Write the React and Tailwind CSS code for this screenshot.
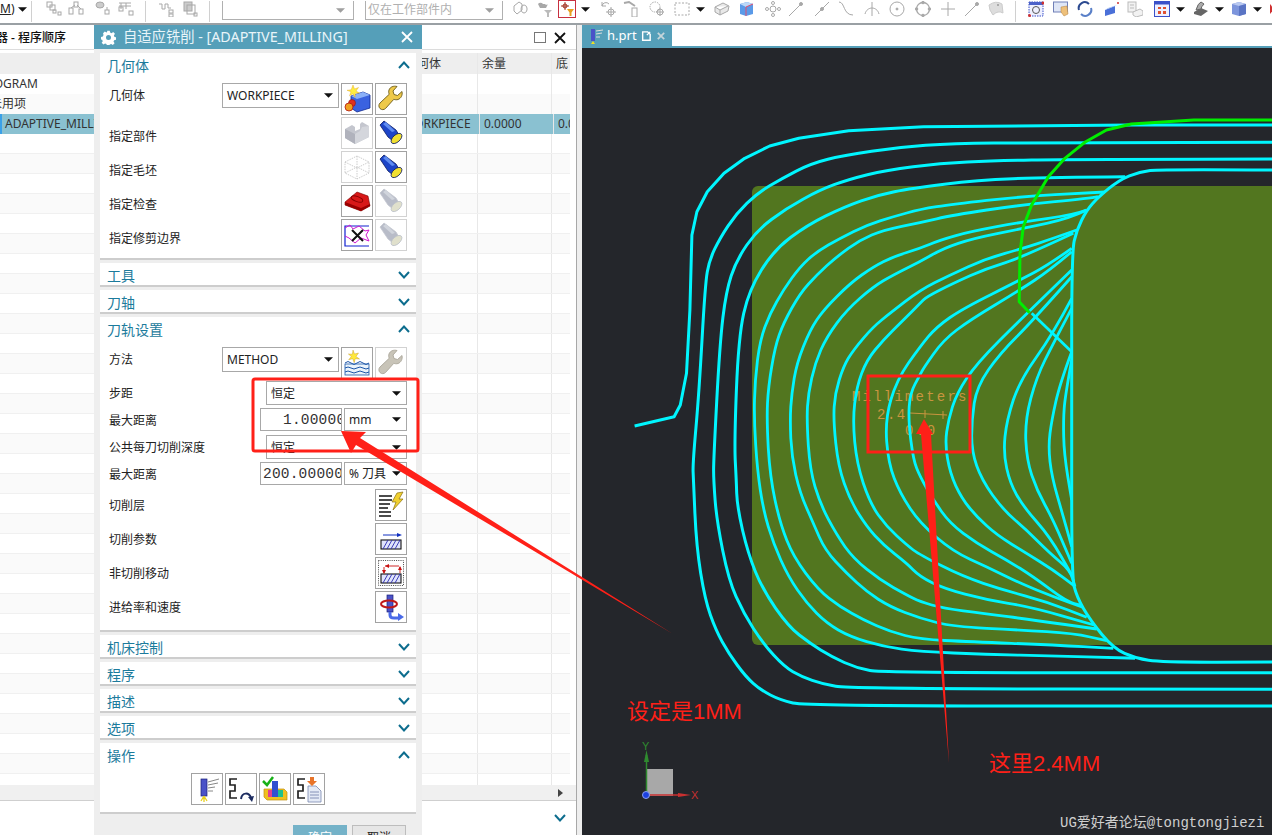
import React from "react";

const u = ([x, y]) => [620 + x / 2.405, 110 + y / 3];
const l = ([x, y]) => [600 + x / 2.333, 480 + y / 3];
const A = ([x, y]) => [750 + x / 3, 180 + y / 3];
const B = ([x, y]) => [920 + x / 3, 180 + y / 3];
const C = ([x, y]) => [750 + x / 3, 420 + y / 3];
const D = ([x, y]) => [920 + x / 3, 420 + y / 3];
const f = (n) => n.toFixed(1);
const path = (pts) => "M" + pts.map((p) => f(p[0]) + " " + f(p[1])).join("L");
const smooth = (pts) => {
  let d = "M" + f(pts[0][0]) + " " + f(pts[0][1]);
  for (let i = 1; i < pts.length - 1; i++) {
    const mx = (pts[i][0] + pts[i + 1][0]) / 2;
    const my = (pts[i][1] + pts[i + 1][1]) / 2;
    d += "Q" + f(pts[i][0]) + " " + f(pts[i][1]) + " " + f(mx) + " " + f(my);
  }
  const e = pts[pts.length - 1];
  return d + "L" + f(e[0]) + " " + f(e[1]);
};
const P = (up, low = []) => smooth([...up.map(u), ...low.map(l)]);
const Q = (b, a, c, d) => smooth([...b.map(B), ...(a || []).map(A), ...(c || []).map(C), ...(d || []).map(D)]);

const outer = [
  path([[35,948],[130,920],[145,885],[160,790],[168,600],[173,375],[185,305],[210,245],[250,190],[300,145],[360,108],[430,85],[550,62],[730,50],[1230,45],[1568,45]].map(u)),
  P([[1568,97],[1000,98],[800,100],[670,112],[540,135],[460,160],[390,205],[330,250],[280,310],[240,385],[215,450],[205,520],[190,850],[175,1060]],
    [[218,0],[225,200],[245,360],[270,450],[300,520],[340,590],[375,630],[420,660],[480,678],[1568,678]]),
  P([[1568,147],[1080,148],[900,152],[770,160],[640,180],[550,208],[480,240],[400,295],[330,360],[280,450],[255,545],[240,700],[225,1050]],
    [[265,0],[272,120],[300,300],[335,400],[380,490],[430,560],[470,590],[520,612],[580,626],[1568,628]]),
  P([[1215,200],[1030,202],[860,210],[700,235],[620,255],[540,290],[450,345],[370,420],[310,540],[285,680],[275,1000]],
    [[318,0],[320,80],[345,220],[380,330],[440,440],[490,490],[540,530],[600,565],[660,578],[1568,578]]),
  smooth([
    ...[[1568,180],[1300,178],[1250,185],[1200,210],[1150,262]].map(u),
    ...[[500,90],[470,150],[455,215],[455,720]].map(B),
    ...[[455,470],[470,530],[510,600],[580,685]].map(D),
    ...[[1250,535],[1310,547],[1568,546]].map(l),
  ]),
];

const inner = [
  Q([[555,36],[510,38],[300,50],[100,72],[0,88]],
    [[430,110],[350,135],[270,175],[200,215],[150,260],[100,330],[60,400],[30,480],[15,600],[12,720]],
    [[22,150],[40,270],[70,370],[115,470],[170,550],[230,610],[300,650],[400,680],[510,695]],
    [[200,703],[400,708],[600,713],[645,715]]),
  Q([[534,50],[510,55],[300,75],[100,105],[0,128]],
    [[400,150],[330,180],[260,230],[200,285],[150,340],[100,430],[75,500],[55,620],[50,720]],
    [[60,170],[90,310],[130,410],[205,510],[270,560],[340,600],[420,635],[510,658]],
    [[150,665],[400,675],[580,685]]),
  Q([[500,90],[460,105],[310,125],[150,155],[60,180],[0,205]],
    [[430,230],[370,260],[300,310],[220,390],[180,450],[140,550],[125,640],[120,720]],
    [[125,110],[150,220],[190,310],[225,390],[290,460],[350,515],[420,560],[510,595]],
    [[100,620],[300,630],[460,640],[560,662]]),
  Q([[500,90],[450,115],[310,145],[160,175],[70,205],[0,245]],
    [[430,285],[370,320],[290,390],[230,470],[195,550],[175,640],[170,720]],
    [[180,150],[210,250],[260,345],[310,415],[390,480],[470,525],[510,545]],
    [[70,565],[190,580],[340,600],[530,627]]),
  Q([[470,150],[400,175],[310,205],[200,235],[90,285],[0,330]],
    [[420,400],[370,440],[310,510],[280,560],[255,640],[250,720]],
    [[265,140],[300,240],[350,320],[400,375],[470,430],[510,470]],
    [[70,505],[200,540],[330,560],[522,615]]),
  Q([[460,160],[300,235],[200,265],[100,310],[20,350],[0,370]],
    [[460,420],[400,480],[350,540],[320,620],[308,720]],
    [[320,130],[360,250],[410,320],[470,375],[510,405]],
    [[130,470],[250,510],[380,545],[500,592]]),
  Q([[455,205],[385,255],[300,300],[130,385],[50,440],[0,500]],
    [[440,600],[405,720]],
    [[415,130],[450,220],[510,310]],
    [[100,395],[200,440],[300,490],[400,530],[488,562]]),
  Q([[455,215],[390,270],[300,330],[150,420],[70,480],[10,565],[0,585]],
    [[480,640],[475,720]],
    [[490,120],[510,170]],
    [[40,240],[90,310],[170,370],[260,420],[340,470],[440,545],[485,556]]),
  Q([[455,270],[300,420],[170,550],[110,640],[85,720]], null, null,
    [[75,70],[90,160],[125,235],[170,290],[230,345],[320,400],[400,450],[462,497]]),
  Q([[455,290],[340,420],[240,520],[170,620],[155,720]], null, null,
    [[155,95],[185,180],[250,270],[320,330],[390,400],[450,450],[465,500]]),
  Q([[455,355],[400,460],[300,600],[260,720]], null, null,
    [[250,100],[270,190],[310,260],[390,350],[458,470]]),
  Q([[455,385],[400,490],[350,590],[315,720]], null, null,
    [[320,120],[350,210],[400,300],[455,430]]),
  Q([[455,515],[420,610],[395,720]], null, null,
    [[385,80],[395,170],[430,290],[455,380]]),
  Q([[455,540],[435,650],[430,720]], null, null,
    [[432,100],[455,240]]),
  path([[335,400],[455,515]].map(B)),
];

const green = path([[1568,30],[1380,30],[1230,42],[1170,60],[1120,95],[1070,145],[1030,200],[990,285],[970,350],[962,430],[960,575],[985,608]].map(u));

const Ic = ({ children }) => (
  <svg viewBox="0 0 28 28" className="h-[28px] w-[28px]">{children}</svg>
);

const Flash = ({ gray }) => (
  <Ic>
    <path d="M3 6L7 2L19 11L22 16L16 22L11 18Z" fill={gray ? "#b8bcc8" : "#1d45c8"} stroke={gray ? "#c4c8d0" : "#0a1a60"} strokeWidth="0.8" />
    <path d="M6 5L9 3L18 12L15 13Z" fill={gray ? "#d0d4dc" : "#5f8cf0"} />
    <ellipse cx="19.5" cy="19.5" rx="6.5" ry="3.6" transform="rotate(-42 19.5 19.5)" fill={gray ? "#e0e0cc" : "#f0df30"} stroke={gray ? "#bcc0c8" : "#0a1a60"} strokeWidth="0.8" />
  </Ic>
);

const Wrench = ({ gray }) => (
  <Ic>
    <path d="M25 6.5l-4.5 4-3.5-1-1-3.5 4-4.5c-3.500-1-7 .5-8 3.500-.5 1.500-.3 3 .2 4.300L3 18c-1.500 1.500-1.500 4 0 5.500s4 1.500 5.500 0l8.300-9.200c1.300.5 2.800.7 4.200.2 3-1 4.800-4.500 4-8z"
      fill={gray ? "#c8c4b8" : "#eec94a"} stroke={gray ? "#aaa69a" : "#6b5a18"} strokeWidth="0.9" />
  </Ic>
);

const GeomNew = () => (
  <Ic>
    <path d="M8 11L20 7L27 10V23L14 27L8 23Z" fill="#3a62e0" stroke="#102a90" strokeWidth="0.8" />
    <path d="M8 11L20 7L27 10L14 14Z" fill="#8ab0f8" />
    <path d="M10 0l1.500 4 4-1.500-2.500 3.500 3.500 2-4.200.3-.3 4-2-3.500-3.500 2 1.500-4-4-1.500 4.200-.5z" fill="#ffee40" stroke="#e0a020" strokeWidth="0.4" />
    <circle cx="9" cy="18" r="3.500" fill="#e03020" stroke="#801010" strokeWidth="0.5" />
    <circle cx="6" cy="22" r="4" fill="#f0a020" stroke="#b01010" strokeWidth="0.8" />
  </Ic>
);

const GrayBlock = () => (
  <Ic>
    <path d="M2 10L9 6L12 8V12L17 10V5L19 3L26 7V18L12 25L2 19Z" fill="#c4c6ce" />
    <path d="M2 10L12 15V25L2 19Z" fill="#b0b2bc" />
    <path d="M12 15L17 12L19 8L26 7V18L12 25Z" fill="#d4d6dc" />
  </Ic>
);

const WireBox = () => (
  <Ic>
    <path d="M2 9L14 3L26 9V20L14 26L2 20ZM2 9L14 15L26 9M14 15V26M2 20L14 14L26 20M14 3V14" fill="none" stroke="#c0c0c0" strokeWidth="0.8" strokeDasharray="1.500 1" />
  </Ic>
);

const RedBlock = () => (
  <Ic>
    <path d="M2 15L14 5L25 9L27 19L18 24L2 18Z" fill="#d81818" stroke="#700" strokeWidth="0.6" />
    <path d="M2 15L18 21L27 17V19L18 24L2 18Z" fill="#900" />
    <ellipse cx="14" cy="12" rx="6" ry="2.500" transform="rotate(20 14 12)" fill="none" stroke="#800" strokeWidth="1" />
  </Ic>
);

const Trim = () => (
  <Ic>
    <path d="M26 5H2V25H26" fill="none" stroke="#1020d0" strokeWidth="1.200" />
    <path d="M2 7L7 4L10 8L16 5L22 10L26 9L23 14L26 20L18 17L12 22L6 17L2 15" fill="none" stroke="#d018d0" strokeWidth="1" />
    <path d="M9 9L20 20M20 9L9 20" stroke="#111" strokeWidth="2" />
  </Ic>
);

const Method = () => (
  <Ic>
    <rect x="2" y="15" width="24" height="11" fill="#eaf3fb" stroke="#1b55a8" strokeWidth="0.8" />
    <path d="M2 14q3 -3 6 0t6 0 6 0 6 0M2 19q3 -2 6 0t6 0 6 0 6 0M2 23q3 -2 6 0t6 0 6 0 6 0" fill="none" stroke="#1b55a8" strokeWidth="1" />
    <path d="M10 1l1.500 4 4-1-2.500 3.500 3.500 2.500-4.300-.3-1 4-1.500-4-4 1 2.700-3.200-3-2.500 4 .2z" fill="#ffe93a" stroke="#c09020" strokeWidth="0.4" />
  </Ic>
);

const Levels = () => (
  <Ic>
    <path d="M2 5H15M2 9H15M2 13H13M2 17H11M2 21H14M2 25H14" stroke="#111" strokeWidth="1.700" />
    <path d="M20 2L26 1L22 8L26 8L16 19L19 11L15 11Z" fill="#f0d030" stroke="#8a7010" strokeWidth="0.7" />
  </Ic>
);

const Hatch = ({ y = 14 }) => (
  <g>
    <rect x="4" y={y} width="20" height="9" fill="#dfe3fb" stroke="#111" strokeWidth="1.100" />
    <path d={`M6 ${y + 9}L11 ${y}M10 ${y + 9}L15 ${y}M14 ${y + 9}L19 ${y}M18 ${y + 9}L23 ${y}`} stroke="#2a2ab0" strokeWidth="0.9" />
  </g>
);

const CutParam = () => (
  <Ic>
    <Hatch y={15} />
    <path d="M6 10H21" stroke="#1030c0" strokeWidth="1" />
    <path d="M25 10L20 8V12Z" fill="#1030c0" />
  </Ic>
);

const NonCut = () => (
  <Ic>
    <rect x="1.500" y="1.500" width="25" height="25" fill="none" stroke="#333" strokeWidth="0.9" strokeDasharray="1 1.200" />
    <Hatch y={15} />
    <path d="M8 7H22M7 8V14M23 8V14" stroke="#c81010" strokeWidth="0.9" />
    <path d="M8 7L12 5V9ZM7 15L5 11H9ZM23 7L21 11H25Z" fill="#c81010" />
  </Ic>
);

const Spindle = () => <rect x="10" y="2" width="6" height="17" fill="#4a52c8" stroke="#1c2078" strokeWidth="0.7" />;

const Feed = () => (
  <Ic>
    <Spindle />
    <ellipse cx="12" cy="11" rx="8" ry="3.500" fill="none" stroke="#c01818" strokeWidth="2" />
    <path d="M13 19V22Q13 25 17 25H22" fill="none" stroke="#4a6ae8" strokeWidth="3" />
    <path d="M27 24L21 20V28Z" fill="#4a6ae8" />
  </Ic>
);

const OpGen = () => (
  <Ic>
    <rect x="8" y="4" width="6" height="17" fill="#4a52c8" stroke="#1c2078" strokeWidth="0.7" />
    <path d="M15 7L26 4M15 10L25 8M15 13L22 12M15 16L20 16" stroke="#888" strokeWidth="1" />
    <path d="M11 21L8 26M11 21L11 27M11 21L14 26" stroke="#e8d020" strokeWidth="1.300" />
  </Ic>
);

const SPath = () => <path d="M10 3H3V9H8V15H3V22H10" transform="translate(0 1)" fill="none" stroke="#222" strokeWidth="1.700" />;

const OpReplay = () => (
  <Ic>
    <SPath />
    <path d="M14 24C15 17 22 17 24 23" fill="none" stroke="#1d2c60" strokeWidth="2" />
    <path d="M27 21L21 22L25 27Z" fill="#1d2c60" />
  </Ic>
);

const OpVerify = () => (
  <Ic>
    <path d="M3 14H23L26 17V25H6L3 22Z" fill="#f0c020" stroke="#c09010" strokeWidth="0.7" />
    <rect x="11" y="6" width="6" height="16" fill="#3050d0" />
    <rect x="7" y="15" width="4" height="7" fill="#e04090" />
    <rect x="17" y="15" width="5" height="7" fill="#20c090" />
    <path d="M2 6L6 10L12 2" fill="none" stroke="#18b018" strokeWidth="2.500" />
  </Ic>
);

const OpList = () => (
  <Ic>
    <SPath />
    <path d="M13 11H21L26 16V27H13Z" fill="#e4eaf6" stroke="#7a88b0" strokeWidth="0.8" />
    <path d="M15 17H24M15 20H24M15 23H24" stroke="#7a88b0" strokeWidth="0.9" />
    <path d="M15 2L19 2L19 6L22 6L17 11L12 6H15Z" fill="#e8742a" />
  </Ic>
);

const Btn = ({ dim, children }) => (
  <div className={"flex h-8 w-8 shrink-0 items-center justify-center border bg-white " + (dim ? "border-[#d2d2d2]" : "border-[#a2a2a2]")}>
    {children}
  </div>
);

const Caret = ({ className = "" }) => (
  <svg viewBox="0 0 10 5" className={"h-[5px] w-[9px] shrink-0 " + className}><path d="M0 0H10L5 5Z" fill="#111" /></svg>
);

const Sel = ({ w, h, children }) => (
  <div className={"flex shrink-0 items-center justify-between border border-[#a8a8a8] bg-white pl-[4px] pr-[5px] text-[12px] text-[#222] " + w + " " + h}>
    <span className="whitespace-nowrap pt-[1px]">{children}</span>
    <Caret />
  </div>
);

const Chevron = ({ up }) => (
  <svg viewBox="0 0 12 8" className="h-[8px] w-[12px]">
    <path d={up ? "M1 7L6 1.500L11 7" : "M1 1L6 6.500L11 1"} fill="none" stroke="#0d6d8e" strokeWidth="2" />
  </svg>
);

const Head = ({ up, children }) => (
  <div className="flex h-[24px] items-center justify-between pl-[7px] pr-[6px] text-[14px] text-[#1c7b9c]">
    <span>{children}</span>
    <Chevron up={up} />
  </div>
);

const Collapsed = ({ children }) => (
  <div className="h-[24px] shrink-0 border-b-2 border-[#cdcdcd] bg-white"><Head>{children}</Head></div>
);

const GeoRow = ({ label, a, b, adim, bdim }) => (
  <div className="flex h-8 items-center justify-between">
    <span className="pt-[8px] text-[12px] text-[#222]">{label}</span>
    <div className="flex gap-[2px]">
      <Btn dim={adim}>{a}</Btn>
      <Btn dim={bdim}>{b}</Btn>
    </div>
  </div>
);

const Lbl = ({ children }) => <span className="pt-[2px] text-[12px] text-[#222]">{children}</span>;

const OneRow = ({ label, icon }) => (
  <div className="flex h-8 items-center justify-between">
    <Lbl>{label}</Lbl>
    <Btn>{icon}</Btn>
  </div>
);

const Num = ({ pad, children }) => (
  <div className={"h-[23px] w-[82px] shrink-0 overflow-hidden whitespace-nowrap border border-[#a8a8a8] bg-white font-['Liberation_Mono',monospace] text-[14.5px] leading-[22px] tracking-[0.2px] text-[#333] " + pad}>
    {children}
  </div>
);

const Dialog = () => (
  <div className="absolute bottom-0 left-[94px] top-[25px] flex w-[328px] flex-col bg-[#eeeeee]">
    <div className="flex h-[24px] shrink-0 items-center bg-[#559fb9] pl-[7px] pr-[9px] text-[14.3px] text-[#e9f5f9]">
      <svg viewBox="0 0 24 24" className="mr-[7px] h-[15px] w-[15px]">
        <path fill="#fff" fillRule="evenodd" d="M10 1h4l.6 3 2.300 1 2.600-1.700 2.800 2.800L20.600 8.700l1 2.300 2.400.6v4l-3 .6-1 2.300 1.700 2.600-2.800 2.800-2.600-1.700-2.300 1-.6 2.300h-4l-.6-3-2.300-1-2.600 1.700L1.100 20.400l1.700-2.600-1-2.300-1.800-.5v-4l3-.6 1-2.300L3.300 5.100 6.100 2.300l2.600 1.700 1-1zM12 8a4 4 0 1 0 0 8 4 4 0 0 0 0-8z" />
      </svg>
      <span className="flex-1 whitespace-nowrap">自适应铣削 - [ADAPTIVE_MILLING]</span>
      <svg viewBox="0 0 12 12" className="h-[12px] w-[12px]"><path d="M1 1L11 11M11 1L1 11" stroke="#fff" strokeWidth="1.800" /></svg>
    </div>
    <div className="flex flex-col gap-[3px] px-[6px] pt-[4px]">
      <div className="h-[207px] shrink-0 border-b-2 border-[#cdcdcd] bg-white">
        <Head up>几何体</Head>
        <div className="flex flex-col gap-[2px] pl-[9px] pr-[9px] pt-[6px]">
          <div className="flex h-8 items-start justify-between">
            <span className="flex h-[25px] items-center text-[12px] text-[#222]">几何体</span>
            <div className="flex gap-[2px]">
              <Sel w="w-[117px]" h="h-[25px]">WORKPIECE</Sel>
              <Btn><GeomNew /></Btn>
              <Btn><Wrench /></Btn>
            </div>
          </div>
          <GeoRow label="指定部件" a={<GrayBlock />} adim b={<Flash />} />
          <GeoRow label="指定毛坯" a={<WireBox />} adim b={<Flash />} />
          <GeoRow label="指定检查" a={<RedBlock />} b={<Flash gray />} bdim />
          <GeoRow label="指定修剪边界" a={<Trim />} b={<Flash gray />} bdim />
        </div>
      </div>
      <Collapsed>工具</Collapsed>
      <Collapsed>刀轴</Collapsed>
      <div className="h-[315px] shrink-0 border-b-2 border-[#cdcdcd] bg-white">
        <Head up>刀轨设置</Head>
        <div className="flex flex-col pl-[9px] pr-[9px] pt-[6px]">
          <div className="flex h-8 items-start justify-between">
            <span className="flex h-[25px] items-center text-[12px] text-[#222]">方法</span>
            <div className="flex gap-[2px]">
              <Sel w="w-[117px]" h="h-[25px]">METHOD</Sel>
              <Btn><Method /></Btn>
              <Btn dim><Wrench gray /></Btn>
            </div>
          </div>
          <div className="mt-[2px] flex h-[24px] items-center justify-between">
            <Lbl>步距</Lbl>
            <Sel w="w-[141px]" h="h-[24px]">恒定</Sel>
          </div>
          <div className="mt-[3px] flex h-[23px] items-center justify-between">
            <Lbl>最大距离</Lbl>
            <div className="flex gap-[2px]">
              <Num pad="pl-[22px]">1.00000</Num>
              <Sel w="w-[63px]" h="h-[23px]">mm</Sel>
            </div>
          </div>
          <div className="mt-[4px] flex h-[24px] items-center justify-between">
            <Lbl>公共每刀切削深度</Lbl>
            <Sel w="w-[141px]" h="h-[24px]">恒定</Sel>
          </div>
          <div className="mt-[3px] flex h-[23px] items-center justify-between">
            <Lbl>最大距离</Lbl>
            <div className="flex gap-[2px]">
              <Num pad="pl-[2px]">200.00000</Num>
              <Sel w="w-[63px]" h="h-[23px]">% 刀具</Sel>
            </div>
          </div>
          <div className="mt-[4px] flex flex-col gap-[2px]">
            <OneRow label="切削层" icon={<Levels />} />
            <OneRow label="切削参数" icon={<CutParam />} />
            <OneRow label="非切削移动" icon={<NonCut />} />
            <OneRow label="进给率和速度" icon={<Feed />} />
          </div>
        </div>
      </div>
      <Collapsed>机床控制</Collapsed>
      <Collapsed>程序</Collapsed>
      <Collapsed>描述</Collapsed>
      <Collapsed>选项</Collapsed>
      <div className="h-[71px] shrink-0 border-b-2 border-[#cdcdcd] bg-white">
        <Head up>操作</Head>
        <div className="flex justify-center gap-[2px] pt-[6px]">
          <Btn><OpGen /></Btn>
          <Btn><OpReplay /></Btn>
          <Btn><OpVerify /></Btn>
          <Btn><OpList /></Btn>
        </div>
      </div>
      <div className="flex justify-end gap-[5px] pr-[10px] pt-[8px]">
        <div className="flex h-[26px] w-[54px] items-center justify-center bg-[#74b2c8] text-[12px] text-white">确定</div>
        <div className="flex h-[26px] w-[54px] items-center justify-center border border-[#bdbdbd] bg-[#e6e6e6] text-[12px] text-[#222]">取消</div>
      </div>
    </div>
  </div>
);

const G = "#a8a8a8";
const gi = {
  nodes: <g fill="none" stroke={G}><rect x="1" y="1" width="5" height="5" /><rect x="4" y="4" width="5" height="5" /><rect x="7" y="9" width="3" height="3" /><rect x="12" y="11" width="3" height="3" /></g>,
  nodes2: <g fill="none" stroke={G}><rect x="6" y="1" width="4" height="5" /><rect x="1" y="7" width="4" height="6" /><rect x="11" y="8" width="4" height="5" /><path d="M3 7L7 4M9 4L13 8" /></g>,
  disc: <g stroke={G} fill="none"><ellipse cx="5" cy="4" rx="4" ry="3" fill="#ccc" /><rect x="10" y="9" width="4" height="4" /><path d="M12 9V6" /></g>,
  bars: <g fill="none" stroke={G}><path d="M1 2H13M1 5H13M3 2V8M8 2V8" /><rect x="1" y="6" width="4" height="4" /><rect x="11" y="10" width="4" height="4" /></g>,
  step: <g fill="none" stroke={G}><path d="M1 3H4V8H7V3H10V7H13" /><rect x="11" y="9" width="4" height="3" /><rect x="11" y="13" width="4" height="3" /></g>,
  stack: <g fill="none" stroke={G}><rect x="2" y="1" width="8" height="9" fill="#ccc" /><rect x="5" y="4" width="8" height="9" /><rect x="12" y="12" width="3" height="3" /></g>,
  box: <g fill="none" stroke={G}><path d="M1 5L6 1L9 3V9L4 13L1 10ZM11 4a3 4 0 1 0 .1 0" /></g>,
  filter: <g fill={G}><path d="M1 3a3 3 0 0 1 5 0h2a2 2 0 0 0 3 0l-2 4H3z" /><path d="M7 9H15L12 12V16H10V12Z" fill="#bbb" /></g>,
  red: <g><path d="M6 1V9M2 5H10" stroke="#a03020" /><circle cx="6" cy="5" r="2" fill="none" stroke="#a03020" /><path d="M8 8H15L12.500 11.500V15H10.500V11.500Z" fill="#e8a020" /></g>,
  undo: <g fill="none" stroke={G}><path d="M2 5a4 4 0 0 1 7 -2" /><path d="M2 1V5H6" /><circle cx="11" cy="11" r="3" /><path d="M11 6V16M6 11H16" /></g>,
  tip: <g fill="none" stroke={G}><path d="M1 2L6 1L9 3L12 5" strokeWidth="2" /><rect x="9" y="7" width="5" height="9" /></g>,
  dashc: <g fill="none" stroke={G}><circle cx="6" cy="6" r="5" strokeDasharray="1.500 1" /><circle cx="11" cy="11" r="3" /><path d="M11 7V15M7 11H15" /></g>,
  dashr: <g fill="none" stroke={G}><rect x="1" y="2" width="14" height="12" strokeDasharray="2 1.500" /></g>,
  cube: <g fill="none" stroke={G}><path d="M1 6L9 2L15 5L14 10L6 14L1 11ZM1 6L6 9L14 5M6 9V14" fill="#e8e8e8" /></g>,
  blue: <g><path d="M2 3L9 1L15 3V13L8 15L2 13Z" fill="#5a9ae8" /><path d="M2 3L9 1L15 3L8 6Z" fill="#bcd8f8" /><path d="M8 6V15M8 6L15 3" stroke="#e05070" fill="none" /></g>,
  cross: <g fill="none" stroke={G}><circle cx="8" cy="8" r="3" /><circle cx="8" cy="2" r="1.500" /><circle cx="8" cy="14" r="1.500" /><circle cx="2" cy="8" r="1.500" /><circle cx="14" cy="8" r="1.500" /></g>,
  line: <g stroke={G} fill={G}><path d="M1 15L14 2" /><circle cx="13" cy="3" r="1.500" /></g>,
  line2: <g stroke={G} fill={G}><path d="M1 15L15 1" /><circle cx="8" cy="8" r="1.500" /></g>,
  curve: <g fill="none" stroke={G}><path d="M1 1C7 1 5 14 15 14" /></g>,
  arc: <g fill="none" stroke={G}><path d="M1 13C3 5 13 5 15 13M8 1V15" /></g>,
  ring: <g fill="none" stroke={G}><circle cx="8" cy="8" r="7" /><circle cx="8" cy="8" r="1" fill={G} /></g>,
  ring2: <g fill="none" stroke={G}><circle cx="8" cy="8" r="6.500" strokeWidth="1.300" /><circle cx="8" cy="1.500" r="1.300" fill={G} /><circle cx="8" cy="14.500" r="1.300" fill={G} /><circle cx="1.500" cy="8" r="1.300" fill={G} /><circle cx="14.500" cy="8" r="1.300" fill={G} /></g>,
  plus: <g stroke={G}><path d="M8 1V15M1 8H15" /></g>,
  face: <g><path d="M1 4Q8 -1 14 3L15 12Q10 9 5 14Q1 9 1 4Z" fill="#ddd" stroke="#ccc" /><circle cx="10" cy="4" r="1" fill="#999" /></g>,
  fit: <g><rect x="1" y="1" width="14" height="14" fill="#eef0ff" stroke="#3a50c8" strokeDasharray="1.500 1" /><rect x="1" y="1" width="14" height="3" fill="#4a60c8" /><circle cx="8" cy="9" r="3.500" fill="none" stroke="#555" /><circle cx="1.500" cy="14.500" r="1.500" fill="#d03030" /><circle cx="15" cy="2" r="1.500" fill="#d03030" /></g>,
  pan: <g><rect x="0.500" y="1" width="14" height="10" fill="#dfe6f6" stroke="#7080b8" /><path d="M8 6L14 5L15 13L11 15L8 11Z" fill="#eec07a" stroke="#b08040" strokeWidth="0.5" /></g>,
  rotate: <g fill="none" stroke="#2c4a90" strokeWidth="2"><path d="M2 9A6 6 0 0 1 12 3" /><path d="M14 7A6 6 0 0 1 4 13" stroke="#5a80c8" /></g>,
  zoom: <g><path d="M1 9L11 5V12L1 15Z" fill="#4a70d8" /><path d="M1 9L4 7L13 4L11 5Z" fill="#a0bcf0" /><circle cx="14" cy="2" r="1" fill="#d03030" /></g>,
  layers: <g fill="none" stroke="#bbb"><rect x="1" y="1" width="8" height="10" fill="#f2f2f2" /><path d="M3 4H7M3 7H7" /><path d="M6 11L13 8L16 10V14L9 16L6 14Z" fill="#f2f2f2" /></g>,
  grid: <g><rect x="0.500" y="0.500" width="15" height="15" fill="#eef0ff" stroke="#3a50c8" /><rect x="0.500" y="0.500" width="15" height="3" fill="#3a50c8" /><path d="M4 6H7V8H4ZM9 6H12V8H9ZM4 10H7V13H4ZM9 10H12V13H9Z" fill="#e05030" /></g>,
  shade: <g><path d="M1 11L8 7L15 10L8 15L1 13Z" fill="#666" /><path d="M3 9Q5 2 8 1L11 3Q8 6 8 8Z" fill="#aaa" stroke="#666" /></g>,
  solid: <g><path d="M1 3L8 1L15 3V13L8 15L1 13Z" fill="#7d95dc" /><path d="M1 3L8 1L15 3L8 5Z" fill="#b8c8f0" /><path d="M8 5L15 3V13L8 15Z" fill="#5a74c4" /></g>,
  last: <g><path d="M1 3L5 8L1 13Z" fill="#d03030" /><path d="M5 8L10 3L15 8L10 13Z" fill="#5a80d8" /><path d="M3 14L6 10L9 15Z" fill="#30a050" /></g>,
};

const T = ({ ml, k, red }) => (
  <svg viewBox="0 0 16 16" className={"h-4 w-4 shrink-0 " + ml + (red ? " outline outline-1 outline-[#c83040]" : "")}>{gi[k]}</svg>
);
const Sep = ({ ml }) => <div className={"h-[21px] w-px shrink-0 bg-[#d0d0d0] " + ml} />;

const Toolbar = () => (
  <div className="flex h-[25px] shrink-0 items-start overflow-hidden border-b-2 border-[#9aa0a4] bg-white pt-[1px]">
    <span className="w-[15px] shrink-0 text-[12px] leading-[16px] text-[#222]"><span className="underline">M</span>)</span>
    <Caret className="ml-[3px] mt-[6px]" />
    <Sep ml="ml-[4px]" />
    <T ml="ml-[14px]" k="nodes" /><T ml="ml-[6px]" k="nodes2" /><T ml="ml-[11px]" k="disc" /><T ml="ml-[7px]" k="bars" />
    <Sep ml="ml-[11px]" />
    <T ml="ml-[12px]" k="step" /><T ml="ml-[8px]" k="stack" />
    <Sep ml="ml-[11px]" />
    <div className="ml-[12px] flex h-[19px] w-[132px] shrink-0 items-center justify-end border-b border-l border-r border-[#b0b0b0] pr-[8px]"><Caret className="opacity-40" /></div>
    <div className="ml-[11px] flex h-[19px] w-[138px] shrink-0 items-center justify-between border-b border-l border-r border-[#b0b0b0] pl-[2px] pr-[8px] text-[12px] text-[#b0b0b0]"><span className="whitespace-nowrap">仅在工作部件内</span><Caret className="opacity-40" /></div>
    <T ml="ml-[10px]" k="box" /><T ml="ml-[8px]" k="filter" /><T ml="ml-[6px]" k="red" red />
    <Caret className="ml-[6px] mt-[6px]" />
    <T ml="ml-[10px]" k="undo" /><T ml="ml-[7px]" k="tip" /><T ml="ml-[10px]" k="dashc" /><T ml="ml-[9px]" k="dashr" />
    <Caret className="ml-[6px] mt-[6px]" />
    <T ml="ml-[9px]" k="cube" /><T ml="ml-[8px]" k="blue" /><T ml="ml-[11px]" k="cross" /><T ml="ml-[7px]" k="line" /><T ml="ml-[10px]" k="line2" /><T ml="ml-[8px]" k="curve" />
    <T ml="ml-[10px]" k="arc" /><T ml="ml-[9px]" k="ring" /><T ml="ml-[10px]" k="ring2" /><T ml="ml-[9px]" k="plus" /><T ml="ml-[8px]" k="line" /><T ml="ml-[8px]" k="face" />
    <Sep ml="ml-[11px]" />
    <T ml="ml-[12px]" k="fit" /><T ml="ml-[9px]" k="pan" /><T ml="ml-[8px]" k="rotate" /><T ml="ml-[11px]" k="zoom" /><T ml="ml-[7px]" k="layers" /><T ml="ml-[11px]" k="grid" />
    <Caret className="ml-[6px] mt-[6px]" />
    <T ml="ml-[8px]" k="shade" />
    <Caret className="ml-[6px] mt-[6px]" />
    <T ml="ml-[7px]" k="solid" />
    <Caret className="ml-[6px] mt-[6px]" />
    <T ml="ml-[7px]" k="last" />
  </div>
);

const rows = Array.from({ length: 36 }, (_, i) => i);

const Cells = ({ a, b, c, d, cls = "" }) => (
  <div className={"grid h-[20px] grid-cols-[400px_78px_74px_18px] text-[12px] leading-[19px] text-[#333] " + cls}>
    <div className="overflow-hidden whitespace-nowrap">{a}</div>
    <div className="overflow-hidden whitespace-nowrap border-l border-r border-[#e8e8e8] pl-[2px]">{b}</div>
    <div className="overflow-hidden whitespace-nowrap border-r border-[#e8e8e8] pl-[4px]">{c}</div>
    <div className="overflow-hidden whitespace-nowrap pl-[4px]">{d}</div>
  </div>
);

const LeftPanel = () => (
  <div className="flex h-full w-[577px] shrink-0 flex-col overflow-hidden border-r border-[#a8a8a8] bg-white pt-[1px]">
    <div className="flex h-[24px] shrink-0 items-center justify-between border-b border-[#dcdcdc] pr-[10px] text-[12px] font-medium text-[#111]">
      <span className="-ml-[4px]">器 - 程序顺序</span>
      <div className="flex items-center gap-[8px]">
        <div className="h-[11px] w-[12px] border border-[#777]" />
        <svg viewBox="0 0 12 12" className="h-[12px] w-[12px]"><path d="M1 1L11 11M11 1L1 11" stroke="#111" strokeWidth="1.800" /></svg>
      </div>
    </div>
    <div className="w-[570px] flex-1 overflow-hidden">
      <Cells cls="mt-[3px] h-[21px] bg-[#eeeeee] leading-[21px]" a="" b={<span className="ml-[2px]">几何体</span>} c="余量" d="底" />
      <Cells cls="bg-white" a={<span className="-ml-[21px]">PROGRAM</span>} />
      <Cells cls="bg-[#fafafa]" a={<span className="-ml-[10px]">未用项</span>} />
      <div className="flex h-[20px]">
        <div className="w-[2px] shrink-0 bg-[#3aa0e8]" />
        <Cells cls="flex-1 bg-[#8ac1d1] text-[#1d3a4a]" a={<span className="pl-[3px]">ADAPTIVE_MILLING</span>} b={<span className="-ml-[2px]">WORKPIECE</span>} c="0.0000" d="0.0" />
      </div>
      {rows.map((i) => (
        <Cells key={i} cls={(i % 2 ? "bg-[#fafafa]" : "bg-white") + " border-b border-[#f0f0f0]"} />
      ))}
    </div>
    <div className="flex h-[15px] shrink-0 items-center justify-end bg-[#f0f0f0] pr-[13px]">
      <svg viewBox="0 0 5 8" className="h-[8px] w-[5px]"><path d="M0 0L5 4L0 8Z" fill="#444" /></svg>
    </div>
    <div className="flex h-[35px] shrink-0 items-center justify-end border-t border-[#cfcfcf] pr-[10px]">
      <Chevron />
    </div>
  </div>
);

const Viewport = () => (
  <div className="flex min-w-0 flex-1 flex-col">
    <div className="flex h-[21px] shrink-0 bg-white">
      <div className="flex w-[90px] items-center bg-[#559fb9] pl-[6px] text-[13px] text-white">
        <svg viewBox="0 0 16 16" className="h-[16px] w-[16px] shrink-0">
          <rect x="3" y="1" width="4" height="12" fill="#4a52c8" />
          <path d="M8 3L15 2M8 6L14 5M8 9L12 9" stroke="#ddd" strokeWidth="1" />
          <path d="M5 13L3 16H7Z" fill="#f0e020" />
        </svg>
        <span className="ml-[3px] w-[28px] shrink-0">h.prt</span>
        <svg viewBox="0 0 12 12" className="ml-[6px] h-[10px] w-[10px] shrink-0"><path d="M2 1H8L11 4V11H2Z" fill="none" stroke="#fff" strokeWidth="1.700" /><path d="M7 5L11 1" stroke="#fff" strokeWidth="1.500" /></svg>
        <svg viewBox="0 0 10 10" className="ml-[6px] h-[8px] w-[8px] shrink-0"><path d="M1 1L9 9M9 1L1 9" stroke="#c5d5da" strokeWidth="2.200" /></svg>
      </div>
    </div>
    <div className="h-[2px] shrink-0 bg-[#559fb9]" />
    <div className="relative flex-1 overflow-hidden bg-[#24262b]">
      <svg viewBox="582 48 690 787" className="h-full w-full">
        <rect x="752" y="186" width="540" height="459" rx="6" fill="#52761f" />
        <g fill="#c9953f" fontFamily="'Liberation Mono',monospace" fontSize="14">
          <text x="852" y="401" letterSpacing="2.200">Millimeters</text>
          <text x="877" y="419" letterSpacing="1.500">2.4</text>
          <text x="905" y="435" letterSpacing="2.500">0.0</text>
        </g>
        <path d="M910 413L947 415M925 410V418M943 411V419" stroke="#c9953f" fill="none" />
        <g fill="none" stroke="#00f6ff" strokeWidth="2.800" strokeLinejoin="round">
          {inner.map((d, i) => <path key={i} d={d} />)}
        </g>
        <g fill="none" stroke="#00f6ff" strokeWidth="3" strokeLinejoin="round">
          {outer.map((d, i) => <path key={i} d={d} />)}
        </g>
        <path d={green} fill="none" stroke="#00ee00" strokeWidth="3" strokeLinejoin="round" />
        <rect x="646" y="769" width="27" height="27" fill="#a8a8a8" />
        <path d="M646.500 795V755" stroke="#2f8a2f" strokeWidth="1.500" />
        <path d="M646.500 750L644 762H649Z" fill="#2f8a2f" />
        <path d="M646 795H685" stroke="#c83030" strokeWidth="1.500" />
        <path d="M691 795L678 793V797Z" fill="#c83030" />
        <circle cx="646" cy="795" r="3.500" fill="#1b40e0" stroke="#8aa0f0" />
        <text x="642" y="750" fill="#2f8a2f" fontFamily="'Liberation Sans',sans-serif" fontSize="11">Y</text>
        <text x="691" y="799" fill="#c83030" fontFamily="'Liberation Sans',sans-serif" fontSize="11">X</text>
      </svg>
    </div>
  </div>
);

const Overlay = () => (
  <>
    <svg viewBox="0 0 1272 835" className="pointer-events-none absolute left-0 top-0 h-[835px] w-[1272px]">
      <rect x="253" y="379" width="165" height="72" rx="2" fill="none" stroke="#ff2018" strokeWidth="3" />
      <rect x="868" y="376" width="102" height="76" fill="none" stroke="#ff2018" strokeWidth="3" />
      <path d="M341 431L366 432L360 438L673 634L356 445L351 453Z" fill="#ff2018" />
      <path d="M924 419L933 434H931L949 763L921 434H916Z" fill="#ff2018" />
    </svg>
    <span className="absolute left-[627px] top-[697px] whitespace-nowrap font-['Liberation_Sans','Noto_Sans_CJK_SC',sans-serif] text-[22px] leading-[30px] text-[#ff2018]">设定是1MM</span>
    <span className="absolute left-[989px] top-[749px] whitespace-nowrap font-['Liberation_Sans','Noto_Sans_CJK_SC',sans-serif] text-[22px] leading-[30px] text-[#ff2018]">这里2.4MM</span>
    <span className="absolute left-[1060px] top-[813px] whitespace-nowrap font-['Liberation_Mono','Noto_Sans_CJK_SC',monospace] text-[14px] leading-[20px] text-[#cfcfcf]">UG爱好者论坛@tongtongjiezi</span>
  </>
);

export default function App() {
  return (
    <div className="relative flex h-[835px] w-[1272px] flex-col overflow-hidden bg-[#eeeeee] font-['Noto_Sans','Noto_Sans_CJK_SC',sans-serif]">
      <Toolbar />
      <div className="flex min-h-0 flex-1 gap-[5px]">
        <LeftPanel />
        <Viewport />
      </div>
      <Dialog />
      <Overlay />
    </div>
  );
}
